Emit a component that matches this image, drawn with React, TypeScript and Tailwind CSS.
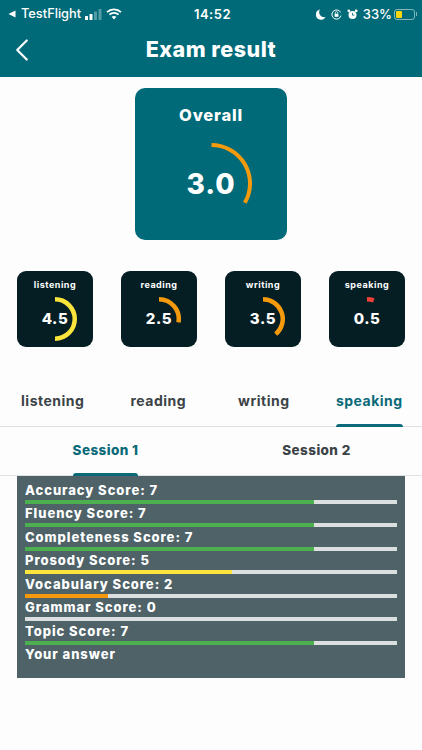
import { ChevronLeft } from "lucide-react";

const font = { fontFamily: "Inter, sans-serif" };

const skills = [
  { name: "listening", score: 4.5, color: "#fbe43b" },
  { name: "reading", score: 2.5, color: "#f59a0c" },
  { name: "writing", score: 3.5, color: "#f59a0c" },
  { name: "speaking", score: 0.5, color: "#ef4136" },
];

const scores = [
  { name: "Accuracy Score", score: 7, color: "#4caf50" },
  { name: "Fluency Score", score: 7, color: "#4caf50" },
  { name: "Completeness Score", score: 7, color: "#4caf50" },
  { name: "Prosody Score", score: 5, color: "#fbe43b" },
  { name: "Vocabulary Score", score: 2, color: "#f59a0c" },
  { name: "Grammar Score", score: 0, color: "#4caf50" },
  { name: "Topic Score", score: 7, color: "#4caf50" },
];

function Arc({ size, stroke, score, color }: { size: number; stroke: number; score: number; color: string }) {
  const r = (size - stroke) / 2;
  const c = size / 2;
  const angle = (score / 9) * 2 * Math.PI;
  const x = c + r * Math.sin(angle);
  const y = c - r * Math.cos(angle);
  const large = score > 4.5 ? 1 : 0;
  return (
    <svg width={size} height={size} viewBox={`0 0 ${size} ${size}`}>
      <path d={`M ${c} ${c - r} A ${r} ${r} 0 ${large} 1 ${x} ${y}`} fill="none" stroke={color} strokeWidth={stroke} />
    </svg>
  );
}

function StatusBar() {
  return (
    <div className="flex h-[22px] items-end justify-between px-[6px] text-[13px] leading-[16px] font-medium text-white">
      <div className="flex flex-1 items-center pl-[2px]">
        <svg width="8" height="8" viewBox="0 0 8 8" className="mr-[5px]">
          <path d="M0.5 4 L7.5 0.5 V7.5 Z" fill="white" />
        </svg>
        <span className="text-[12.8px]">TestFlight</span>
        <svg width="17" height="11" viewBox="0 0 17 11" className="ml-[4px]">
          <rect x="0" y="7" width="3" height="4" rx="0.5" fill="white" />
          <rect x="4.5" y="5" width="3" height="6" rx="0.5" fill="white" />
          <rect x="9" y="2.5" width="3" height="8.5" rx="0.5" fill="#ffffff55" />
          <rect x="13.5" y="0" width="3" height="11" rx="0.5" fill="#ffffff55" />
        </svg>
        <svg width="16" height="12" viewBox="0 0 16 12" className="ml-[4px]">
          <path d="M1 4.2 C5 0.4 11 0.4 15 4.2 M3.4 6.6 C6 4.2 10 4.2 12.6 6.6" fill="none" stroke="white" strokeWidth="1.8" />
          <path d="M5.6 8.8 C7 7.6 9 7.6 10.4 8.8 L8 11.4 Z" fill="white" />
        </svg>
      </div>
      <span className="font-semibold tracking-[0.5px]">14:52</span>
      <div className="-mr-[1px] flex flex-1 items-center justify-end">
        <svg width="10" height="11" viewBox="0 0 10 11">
          <path d="M4 0.5 A5.2 5.2 0 1 0 9.6 8 A5 5 0 0 1 4 0.5 Z" fill="white" />
        </svg>
        <svg width="11" height="11" viewBox="0 0 11 11" className="ml-[5px]">
          <path d="M9.6 3.4 A4.6 4.6 0 1 0 10 6.6" fill="none" stroke="white" strokeWidth="1" />
          <rect x="3.6" y="4.8" width="3.8" height="3" fill="white" />
          <path d="M4.3 4.8 V3.8 A1.2 1.2 0 0 1 6.7 3.8 V4.8" fill="none" stroke="white" strokeWidth="0.8" />
        </svg>
        <svg width="11" height="11" viewBox="0 0 11 11" className="ml-[5px]">
          <circle cx="5.5" cy="6" r="4" fill="white" />
          <circle cx="1.8" cy="1.8" r="1.4" fill="white" />
          <circle cx="9.2" cy="1.8" r="1.4" fill="white" />
          <path d="M5.5 3.8 V6.2 H7.4" fill="none" stroke="#006a78" strokeWidth="0.8" />
        </svg>
        <span className="ml-[5px]">33%</span>
        <div className="ml-[2px] flex h-[11px] w-[21px] items-center rounded-[3px] border border-white/50 p-[1px]">
          <div className="h-full w-[6px] rounded-[1px] bg-[#fbd80e]" />
        </div>
        <div className="ml-[1px] h-[4px] w-[1px] bg-white/50" />
      </div>
    </div>
  );
}

function SkillCard({ name, score, color }: { name: string; score: number; color: string }) {
  return (
    <div className="flex h-[76px] w-[76px] flex-col items-center rounded-[9px] bg-[#051e24] pt-[8px] text-white">
      <span className="text-[9px] leading-[11px] font-bold tracking-[0.5px]">{name}</span>
      <div className="relative mt-[7px]">
        <Arc size={44} stroke={4.5} score={score} color={color} />
        <span className="absolute inset-0 flex items-center justify-center text-[15px] font-extrabold tracking-[0.6px]">
          {score.toFixed(1)}
        </span>
      </div>
    </div>
  );
}

export default function App() {
  return (
    <div className="flex min-h-screen flex-col bg-[#fdfdfd]" style={font}>
      <div className="h-[77px] bg-[#006a78]">
        <StatusBar />
        <div className="relative flex h-[55px] items-center justify-center">
          <ChevronLeft className="absolute left-[3px] text-white" size={38} strokeWidth={1.4} />
          <h1 className="text-[21.5px] font-extrabold tracking-[0.5px] text-white">Exam result</h1>
        </div>
      </div>

      <div className="mx-auto mt-[11px] flex h-[152px] w-[152px] flex-col items-center rounded-[10px] bg-[#006a78] pt-[17px] text-white">
        <span className="text-[16.5px] leading-[20px] font-extrabold tracking-[0.8px]">Overall</span>
        <div className="relative mt-[18px]">
          <Arc size={81} stroke={4} score={3} color="#f59a0c" />
          <span className="absolute inset-0 flex items-center justify-center text-[28px] font-extrabold tracking-[1px]">
            3.0
          </span>
        </div>
      </div>

      <div className="mt-[31px] flex justify-between px-[17px]">
        {skills.map((s) => (
          <SkillCard key={s.name} {...s} />
        ))}
      </div>

      <div className="mt-[31px] grid h-[49px] grid-cols-4 border-b border-[#dde1e4]">
        {["listening", "reading", "writing", "speaking"].map((t) => (
          <div key={t} className="flex justify-center">
            <div
              className={
                t === "speaking"
                  ? "flex flex-col justify-between pt-[14px] text-[#0b6a78]"
                  : "flex flex-col justify-between pt-[14px] text-[#3c4347]"
              }
            >
              <span className="text-[14px] leading-[18px] font-bold tracking-[0.5px]">{t}</span>
              {t === "speaking" && <div className="-mb-px h-[3px] rounded-t-[3px] bg-[#0b6a78]" />}
            </div>
          </div>
        ))}
      </div>

      <div className="grid h-[49px] grid-cols-2 border-b border-[#dde1e4]">
        {["Session 1", "Session 2"].map((t, i) => (
          <div key={t} className="flex justify-center">
            <div
              className={
                i === 0
                  ? "flex flex-col justify-between pt-[14px] text-[#0b6a78]"
                  : "flex flex-col justify-between pt-[14px] text-[#3c4347]"
              }
            >
              <span className="text-[13.5px] leading-[18px] font-extrabold tracking-[0.4px]">{t}</span>
              {i === 0 && <div className="-mb-px h-[3px] rounded-t-[3px] bg-[#0b6a78]" />}
            </div>
          </div>
        ))}
      </div>

      <div className="mx-[17px] h-[202px] bg-[#4e6268] px-[8px] pt-[5.5px] text-white">
        {scores.map((s) => (
          <div key={s.name} className="h-[23.5px]">
            <div className="text-[13px] leading-[17px] font-extrabold tracking-[0.95px]">
              {s.name}: {s.score}
            </div>
            <div className="mt-[1px] h-[4px] bg-[#dcdfe0]">
              <div className="h-full" style={{ width: `${(s.score / 9) * 100}%`, backgroundColor: s.color }} />
            </div>
          </div>
        ))}
        <div className="text-[13px] leading-[17px] font-extrabold tracking-[0.95px]">Your answer</div>
      </div>
    </div>
  );
}
